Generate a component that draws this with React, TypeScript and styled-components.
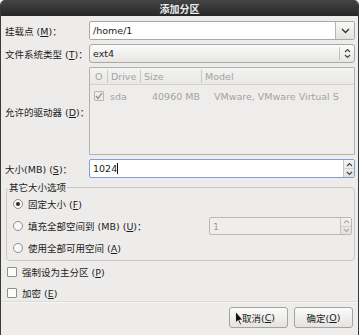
import React from "react";
import styled, { createGlobalStyle } from "styled-components";

const Global = createGlobalStyle`
  html, body { margin: 0; padding: 0; background: #ffffff; }
  body {
    font-family: "DejaVu Sans", "Noto Sans CJK SC", sans-serif;
    font-size: 9.5px;
    color: #1c1c1c;
  }
  * { box-sizing: border-box; }
`;

const Window = styled.div`
  width: 359px;
  height: 335px;
  display: flex;
  flex-direction: column;
  background: #edeceb;
  border-left: 1px solid #3a3a3a;
  border-right: 1px solid #3a3a3a;
  border-radius: 5px 5px 0 0;
  overflow: hidden;
`;

const TitleBar = styled.div`
  height: 16px;
  flex: none;
  background: linear-gradient(#454545, #262626);
  color: #ececec;
  font-weight: bold;
  font-size: 10px;
  display: flex;
  align-items: center;
  justify-content: center;
`;

const Body = styled.div`
  padding: 5px 3px 0 4px;
  display: flex;
  flex-direction: column;
`;

const FormGrid = styled.div`
  display: grid;
  grid-template-columns: 84px 1fr;
  row-gap: 4px;
  align-items: center;
`;

const Label = styled.div`
  white-space: nowrap;
`;

const Combo = styled.div`
  display: flex;
  height: 19px;
  border: 1px solid #a9a8a5;
  border-radius: 2px;
  background: #fff;
  overflow: hidden;
`;

const EntryText = styled.div<{ $muted?: boolean }>`
  flex: 1;
  display: flex;
  align-items: center;
  padding-left: 3px;
  color: ${(p) => (p.$muted ? "#9c9c9c" : "#1c1c1c")};
`;

const ComboArrow = styled.div`
  width: 19px;
  border-left: 1px solid #b5b4b1;
  background: linear-gradient(#f7f7f6, #e3e2df);
  display: flex;
  align-items: center;
  justify-content: center;
`;

const SelectButton = styled.div`
  display: flex;
  height: 19px;
  border: 1px solid #a9a8a5;
  border-radius: 3px;
  background: linear-gradient(#fbfbfa, #e7e6e4);
  align-items: center;
  padding-left: 3px;
`;

const SelectValue = styled.div`
  flex: 1;
`;

const SelectSep = styled.div`
  width: 1px;
  height: 13px;
  background: #c2c1be;
  margin-right: 3px;
`;

const SelectIcon = styled.div`
  width: 9px;
  display: flex;
  align-items: center;
  justify-content: center;
  margin-right: 2px;
`;

const ListBox = styled.div`
  height: 88px;
  border: 1px solid #b2b1ae;
  border-radius: 1px;
  background: #eeedec;
  display: flex;
  flex-direction: column;
  color: #a3a3a2;
`;

const ListHeader = styled.div`
  height: 17px;
  display: flex;
  align-items: center;
  border-bottom: 1px solid #d2d1ce;
  background: linear-gradient(#f3f3f2, #e9e8e6);
`;

const HeadCell = styled.div<{ $w: number }>`
  width: ${(p) => p.$w}px;
  flex: none;
  display: flex;
  align-items: center;
  height: 13px;
  padding-left: 3px;
  border-left: 1px solid #c9c8c5;
  &:first-child {
    border-left: none;
    padding-left: 5px;
  }
`;

const ListRow = styled.div`
  height: 20px;
  display: flex;
  align-items: center;
  margin-top: 1px;
`;

const RowCell = styled.div<{ $w: number }>`
  width: ${(p) => p.$w}px;
  flex: none;
  display: flex;
  align-items: center;
  white-space: nowrap;
  &:first-child {
    padding-left: 4px;
  }
`;

const DriveLabel = styled.div`
  align-self: center;
  white-space: nowrap;
  padding-top: 1px;
`;

const Spin = styled.div<{ $focus?: boolean; $disabled?: boolean }>`
  display: flex;
  height: ${(p) => (p.$disabled ? 18 : 19)}px;
  border: 1px solid ${(p) => (p.$focus ? "#7ea3cf" : "#b9b8b5")};
  border-radius: 2px;
  background: ${(p) => (p.$disabled ? "#efeeed" : "#fff")};
  overflow: hidden;
`;

const SpinButtons = styled.div`
  width: 11px;
  display: flex;
  flex-direction: column;
  border-left: 1px solid #c4c3c0;
  background: linear-gradient(#f4f4f3, #e2e1de);
`;

const SpinHalf = styled.div`
  flex: 1;
  display: flex;
  align-items: center;
  justify-content: center;
  &:first-child {
    border-bottom: 1px solid #d1d0cd;
  }
`;

const Cursor = styled.span`
  display: inline-block;
  width: 1px;
  height: 11px;
  background: #111;
`;

const Frame = styled.fieldset`
  margin: 4px 0 0 1px;
  padding: 0 2px 1px 4px;
  border: 1px solid #c9c8c5;
  border-radius: 4px;
  min-width: 0;
`;

const Legend = styled.legend`
  padding: 0 1px;
  margin-left: -3px;
  line-height: 11px;
`;

const OptionRow = styled.div`
  height: 22px;
  display: flex;
  align-items: center;
  gap: 5px;
`;

const OptionFill = styled.div`
  flex: 1;
`;

const SpinSlot = styled.div`
  width: 143px;
`;

const CheckRow = styled.div`
  height: 14px;
  display: flex;
  align-items: center;
  gap: 5px;
  padding-left: 2px;
`;

const Checks = styled.div`
  display: flex;
  flex-direction: column;
  gap: 7px;
  margin-top: 4px;
`;

const Separator = styled.div`
  height: 1px;
  background: #dcdbd8;
  border-bottom: 1px solid #f6f6f5;
  box-sizing: content-box;
  margin: 1px -3px 0 -4px;
`;

const ButtonBar = styled.div`
  display: flex;
  justify-content: flex-end;
  gap: 6px;
  padding: 4px 2px 0 0;
`;

const Button = styled.div`
  position: relative;
  width: 59px;
  height: 21px;
  border: 1px solid #a5a4a1;
  border-radius: 3px;
  background: linear-gradient(#fbfbfa, #e4e3e1);
  display: flex;
  align-items: center;
  justify-content: center;
`;

const Pointer = styled.svg`
  position: absolute;
  left: 5px;
  top: 3px;
`;

const Box = styled.span<{ $gray?: boolean }>`
  display: inline-flex;
  width: 10px;
  height: 10px;
  border: 1px solid ${(p) => (p.$gray ? "#b6b5b2" : "#8f8e8b")};
  border-radius: 1px;
  background: ${(p) => (p.$gray ? "#efeeed" : "#fbfbfa")};
  align-items: center;
  justify-content: center;
  flex: none;
`;

const Radio = styled.span`
  display: inline-flex;
  width: 10px;
  height: 10px;
  border: 1px solid #8f8e8b;
  border-radius: 50%;
  background: #fbfbfa;
  align-items: center;
  justify-content: center;
  flex: none;
  margin-left: 2px;
`;

const Dot = styled.span`
  width: 4px;
  height: 4px;
  border-radius: 50%;
  background: #2a2a2a;
`;

const Chevron = () => (
  <svg width="9" height="6" viewBox="0 0 9 6">
    <path d="M1 1 L4.5 4.5 L8 1" fill="none" stroke="#333" strokeWidth="1.4" />
  </svg>
);

const UpDown = ({ color = "#444" }: { color?: string }) => (
  <svg width="7" height="11" viewBox="0 0 7 11">
    <path d="M1 4 L3.5 1.5 L6 4 M1 7 L3.5 9.5 L6 7" fill="none" stroke={color} strokeWidth="1.2" />
  </svg>
);

const Up = ({ color = "#444" }: { color?: string }) => (
  <svg width="7" height="5" viewBox="0 0 7 5">
    <path d="M1 4 L3.5 1.5 L6 4" fill="none" stroke={color} strokeWidth="1.2" />
  </svg>
);

const Down = ({ color = "#444" }: { color?: string }) => (
  <svg width="7" height="5" viewBox="0 0 7 5">
    <path d="M1 1 L3.5 3.5 L6 1" fill="none" stroke={color} strokeWidth="1.2" />
  </svg>
);

const Check = () => (
  <svg width="8" height="8" viewBox="0 0 8 8">
    <path d="M1 4 L3 6.5 L7 1" fill="none" stroke="#9a9a99" strokeWidth="1.4" />
  </svg>
);

const M = ({ c }: { c: string }) => <u>{c}</u>;

export default function App() {
  return (
    <>
      <Global />
      <Window>
        <TitleBar>添加分区</TitleBar>
        <Body>
          <FormGrid>
            <Label>
              挂载点 (<M c="M" />)：
            </Label>
            <Combo>
              <EntryText>/home/1</EntryText>
              <ComboArrow>
                <Chevron />
              </ComboArrow>
            </Combo>

            <Label>
              文件系统类型 (<M c="T" />)：
            </Label>
            <SelectButton>
              <SelectValue>ext4</SelectValue>
              <SelectSep />
              <SelectIcon>
                <UpDown />
              </SelectIcon>
            </SelectButton>

            <DriveLabel>
              允许的驱动器 (<M c="D" />)：
            </DriveLabel>
            <ListBox>
              <ListHeader>
                <HeadCell $w={17}>O</HeadCell>
                <HeadCell $w={33}>Drive</HeadCell>
                <HeadCell $w={61}>Size</HeadCell>
                <HeadCell $w={150}>Model</HeadCell>
              </ListHeader>
              <ListRow>
                <RowCell $w={20}>
                  <Box $gray>
                    <Check />
                  </Box>
                </RowCell>
                <RowCell $w={42}>sda</RowCell>
                <RowCell $w={62}>40960 MB</RowCell>
                <RowCell $w={140}>VMware, VMware Virtual S</RowCell>
              </ListRow>
            </ListBox>

            <Label>
              大小(MB) (<M c="S" />)：
            </Label>
            <Spin $focus>
              <EntryText>
                1024
                <Cursor />
              </EntryText>
              <SpinButtons>
                <SpinHalf>
                  <Up />
                </SpinHalf>
                <SpinHalf>
                  <Down />
                </SpinHalf>
              </SpinButtons>
            </Spin>
          </FormGrid>

          <Frame>
            <Legend>其它大小选项</Legend>
            <OptionRow>
              <Radio>
                <Dot />
              </Radio>
              <span>
                固定大小 (<M c="F" />)
              </span>
            </OptionRow>
            <OptionRow>
              <Radio />
              <OptionFill>
                填充全部空间到 (MB) (<M c="U" />)：
              </OptionFill>
              <SpinSlot>
                <Spin $disabled>
                  <EntryText $muted>1</EntryText>
                  <SpinButtons>
                    <SpinHalf>
                      <Up color="#aaa" />
                    </SpinHalf>
                    <SpinHalf>
                      <Down color="#aaa" />
                    </SpinHalf>
                  </SpinButtons>
                </Spin>
              </SpinSlot>
            </OptionRow>
            <OptionRow>
              <Radio />
              <span>
                使用全部可用空间 (<M c="A" />)
              </span>
            </OptionRow>
          </Frame>

          <Checks>
            <CheckRow>
              <Box />
              <span>
                强制设为主分区 (<M c="P" />)
              </span>
            </CheckRow>
            <CheckRow>
              <Box />
              <span>
                加密 (<M c="E" />)
              </span>
            </CheckRow>
          </Checks>
          <Separator />

          <ButtonBar>
            <Button>
              <Pointer width="9" height="15" viewBox="0 0 9 15">
                <path d="M0.5 0.5 L0.5 12 L3 9.5 L5 14 L6.5 13.3 L4.6 9 L8 9 Z" fill="#111" stroke="#fff" strokeWidth="0.8" />
              </Pointer>
              取消(<M c="C" />)
            </Button>
            <Button>
              确定(<M c="O" />)
            </Button>
          </ButtonBar>
        </Body>
      </Window>
    </>
  );
}
